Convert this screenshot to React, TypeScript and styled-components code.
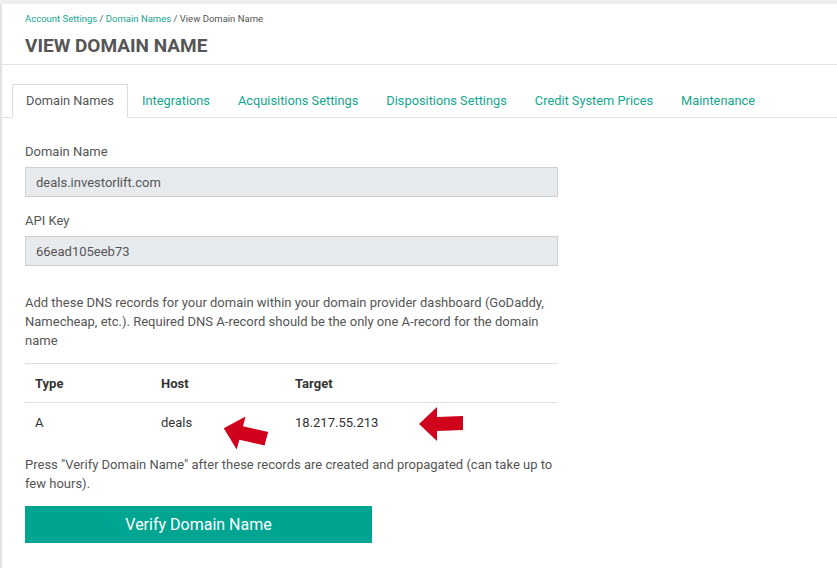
import React from 'react'
import styled, { createGlobalStyle } from 'styled-components'

const GlobalStyle = createGlobalStyle`
    html, body {
        margin: 0;
        padding: 0;
        background: #efefef;
        font-family: Roboto, "Liberation Sans", Arial, sans-serif;
    }
    * {
        box-sizing: border-box;
    }
`

const tabs = ['Domain Names', 'Integrations', 'Acquisitions Settings', 'Dispositions Settings', 'Credit System Prices', 'Maintenance']

const records = [
    {type: 'A', host: 'deals', target: '18.217.55.213'},
]

const Arrow = ({ className }: { className?: string }) => (
    <svg className={className} width={44} height={34} viewBox="0 0 44 34">
        <polygon points="0,17 18,0 18,10 44,9 44,23 18,24 18,34" fill="#d0021b" />
    </svg>
)

export default function App() {
    const [active, setActive] = React.useState(0)

    return (
        <>
            <GlobalStyle />
            <Page>
                <Header>
                    <Breadcrumb>
                        <a>Account Settings</a> / <a>Domain Names</a> / <span>View Domain Name</span>
                    </Breadcrumb>
                    <Title>VIEW DOMAIN NAME</Title>
                </Header>
                <TabBar>
                    {tabs.map((t, k) => (
                        <Tab key={k} $active={k === active} onClick={() => setActive(k)}>{t}</Tab>
                    ))}
                </TabBar>
                <Content>
                    <Field>
                        <Label>Domain Name</Label>
                        <Input readOnly value="deals.investorlift.com" />
                    </Field>
                    <Field>
                        <Label>API Key</Label>
                        <Input readOnly value="66ead105eeb73" />
                    </Field>
                    <Text className="intro">
                        Add these DNS records for your domain within your domain provider dashboard (GoDaddy, Namecheap, etc.). Required DNS A-record should be the only one A-record for the domain name
                    </Text>
                    <TableWrap>
                        <Table>
                            <thead>
                                <tr>
                                    <th style={{width: 126}}>Type</th>
                                    <th style={{width: 134}}>Host</th>
                                    <th>Target</th>
                                </tr>
                            </thead>
                            <tbody>
                                {records.map((r, k) => (
                                    <tr key={k}>
                                        <td>{r.type}</td>
                                        <td>{r.host}</td>
                                        <td>{r.target}</td>
                                    </tr>
                                ))}
                            </tbody>
                        </Table>
                        <HostArrow />
                        <TargetArrow />
                    </TableWrap>
                    <Text>
                        Press "Verify Domain Name" after these records are created and propagated (can take up to few hours).
                    </Text>
                    <Button>Verify Domain Name</Button>
                </Content>
            </Page>
        </>
    )
}

const Page = styled.div`
    margin-top: 4px;
    min-height: 564px;
    background: #fff;
    border-left: 2px solid #e3e3e3;
`

const Header = styled.div`
    height: 61px;
    padding: 8px 0 0 23px;
    border-bottom: 1px solid #e2e2e2;
`

const Breadcrumb = styled.div`
    font-size: 9.5px;
    line-height: 13px;
    color: #555;
    a {
        color: #14a58f;
        text-decoration: none;
        cursor: pointer;
    }
`

const Title = styled.h1`
    margin: 10px 0 0;
    font-size: 19px;
    line-height: 22px;
    font-weight: 700;
    color: #555;
`

const TabBar = styled.div`
    display: flex;
    margin-top: 19px;
    padding-left: 10px;
    border-bottom: 1px solid #e0e0e0;
`

const Tab = styled.div<{ $active?: boolean }>`
    height: 34px;
    padding: 0 13px;
    margin-bottom: -1px;
    display: flex;
    align-items: center;
    font-size: 12.8px;
    line-height: 32px;
    cursor: pointer;
    color: ${p => p.$active ? '#555' : '#14a58f'};
    background: ${p => p.$active ? '#fff' : 'transparent'};
    border: 1px solid ${p => p.$active ? '#ddd' : 'transparent'};
    border-bottom-color: ${p => p.$active ? '#fff' : 'transparent'};
`

const Content = styled.div`
    width: 556px;
    padding: 24px 0 24px 23px;
`

const Field = styled.div`
    margin-bottom: 14px;
`

const Label = styled.div`
    font-size: 13px;
    line-height: 20px;
    color: #555;
    margin-bottom: 5px;
`

const Input = styled.input`
    display: block;
    width: 100%;
    height: 30px;
    padding: 0 10px;
    font-family: inherit;
    font-size: 13px;
    color: #555;
    background: #e8ebee;
    border: 1px solid #cfcfcf;
    border-radius: 0;
    outline: 0;
`

const Text = styled.p`
    margin: 0;
    font-size: 13px;
    line-height: 19px;
    color: #555;
    &.intro {
        margin-top: 27px;
    }
`

const TableWrap = styled.div`
    position: relative;
    margin: 13px 0 12px;
`

const Table = styled.table`
    width: 100%;
    border-collapse: collapse;
    font-size: 13px;
    color: #333;
    th, td {
        text-align: left;
        padding: 0 10px;
        height: 39px;
    }
    th {
        font-weight: 700;
        border-top: 1px solid #e0e0e0;
        border-bottom: 1px solid #e0e0e0;
    }
    td {
        height: 40px;
    }
`

const HostArrow = styled(Arrow)`
    position: absolute;
    left: 198px;
    top: 54px;
    transform: rotate(15deg);
`

const TargetArrow = styled(Arrow)`
    position: absolute;
    left: 394px;
    top: 44px;
`

const Button = styled.button`
    display: block;
    margin-top: 13px;
    width: 347px;
    height: 37px;
    border: 0;
    border-radius: 0;
    background: #00a591;
    color: #fff;
    font-family: inherit;
    font-size: 16px;
    cursor: pointer;
`
